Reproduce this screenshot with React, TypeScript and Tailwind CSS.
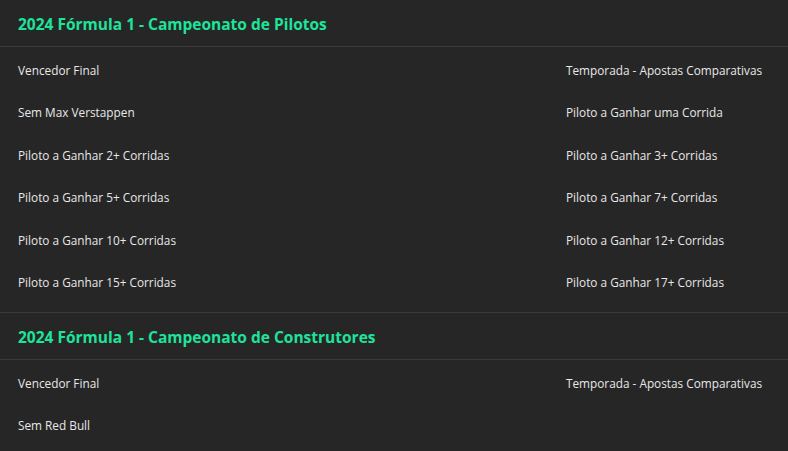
const sections = [
  {
    title: '2024 Fórmula 1 - Campeonato de Pilotos',
    rows: [
      ['Vencedor Final', 'Temporada - Apostas Comparativas'],
      ['Sem Max Verstappen', 'Piloto a Ganhar uma Corrida'],
      ['Piloto a Ganhar 2+ Corridas', 'Piloto a Ganhar 3+ Corridas'],
      ['Piloto a Ganhar 5+ Corridas', 'Piloto a Ganhar 7+ Corridas'],
      ['Piloto a Ganhar 10+ Corridas', 'Piloto a Ganhar 12+ Corridas'],
      ['Piloto a Ganhar 15+ Corridas', 'Piloto a Ganhar 17+ Corridas'],
    ],
  },
  {
    title: '2024 Fórmula 1 - Campeonato de Construtores',
    rows: [
      ['Vencedor Final', 'Temporada - Apostas Comparativas'],
      ['Sem Red Bull', ''],
    ],
  },
];

export default function App() {
  return (
    <div
      className="min-h-[451px] w-[788px] bg-[#262626] text-[#e8e8e8]"
      style={{ fontFamily: '"Open Sans", "Noto Sans", sans-serif' }}
    >
      {sections.map((s) => (
        <section key={s.title} className="border-b border-[#3a3a3a] pb-[10px] last:border-b-0">
          <h2 className="flex h-[47px] items-center border-b border-[#3a3a3a] px-[18px] pt-[4px] text-[15.5px] font-bold text-[#1ee39b]">
            {s.title}
          </h2>
          {s.rows.map(([a, b]) => (
            <div key={a} className="grid h-[42.5px] grid-cols-[1fr_204px] items-center whitespace-nowrap px-[18px] pt-[5px] text-[11.8px]">
              <span>{a}</span>
              <span>{b}</span>
            </div>
          ))}
        </section>
      ))}
    </div>
  );
}
